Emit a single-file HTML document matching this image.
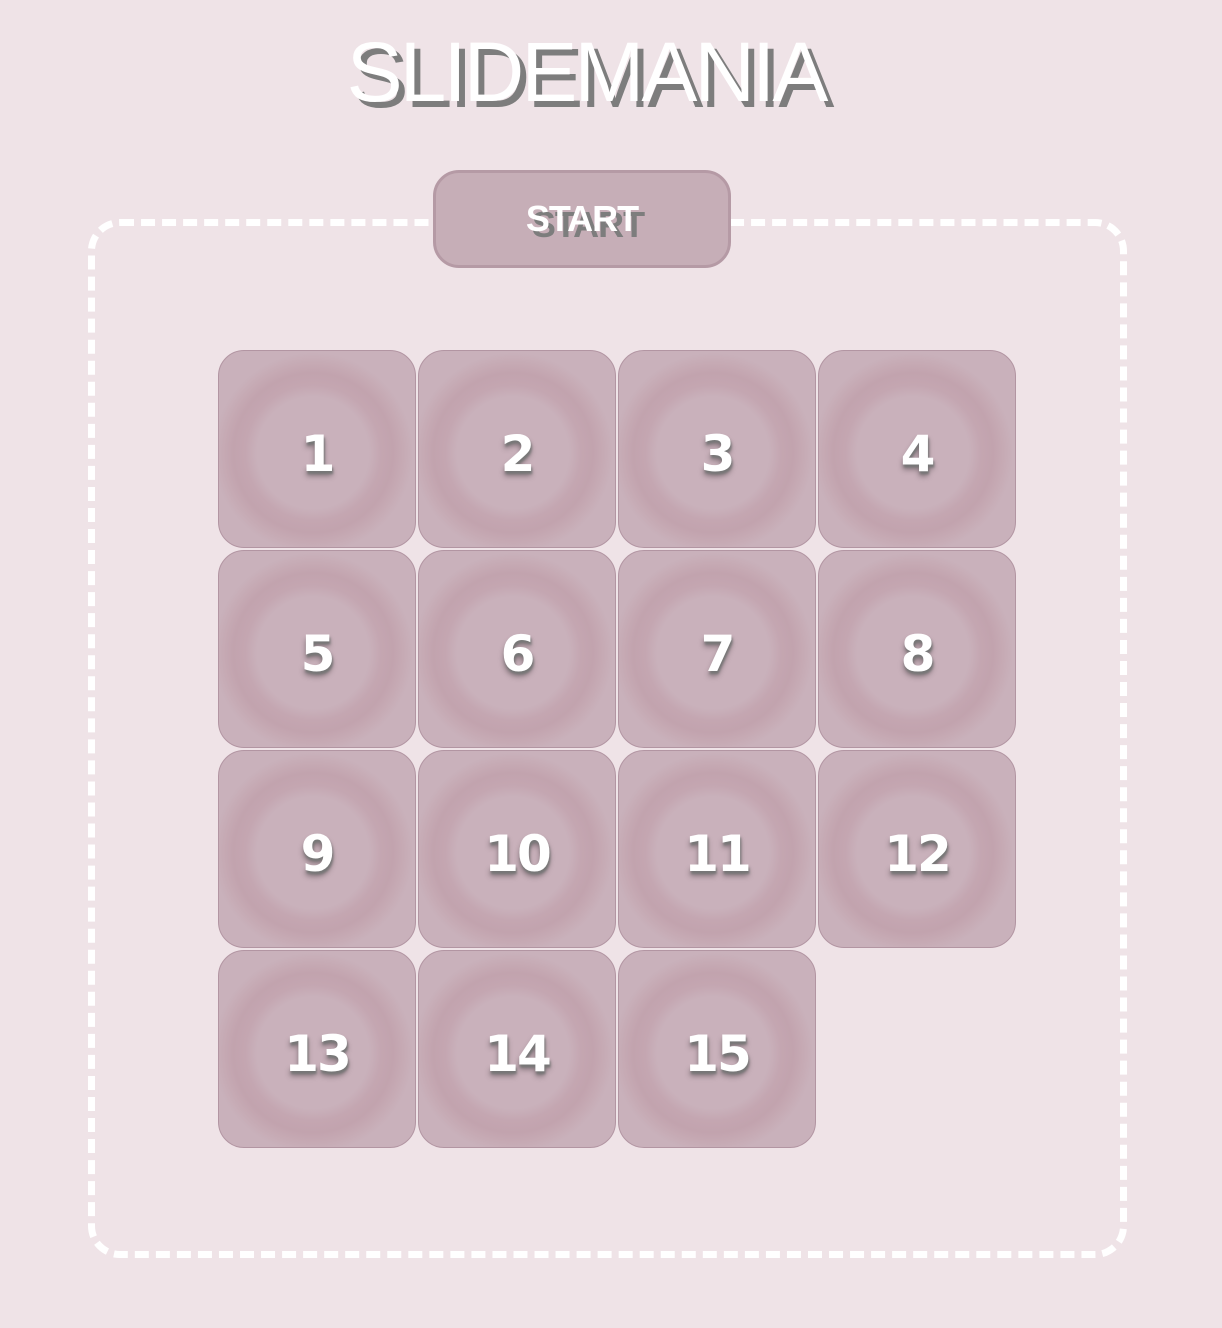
<!DOCTYPE html>
<html><head><style>
body{margin:0;width:1222px;height:1328px;background:#efe3e7;position:relative;overflow:hidden;font-family:"Liberation Sans",Arial,sans-serif}
h1{position:absolute;left:0;width:1172px;margin:0;top:24px;text-align:center;font-size:84px;font-weight:normal;letter-spacing:-3px;color:#fff;text-shadow:6px 6px 0 #7d7d7d;line-height:96px}
.box{position:absolute;left:88px;top:219px;width:1025px;height:1025px;border:7px dashed #fff;border-radius:32px}
.btn{position:absolute;left:433px;top:170px;width:292px;height:92px;background:#c6aeb7;border:3px solid #b59aa5;border-radius:26px;color:#fff;font-weight:bold;font-size:36px;text-align:center;line-height:92px;text-shadow:6px 6px 0 #7d7d7d;letter-spacing:-1px}
.t{position:absolute;width:196px;height:196px;border:1px solid #b295a2;border-radius:26px;background:
radial-gradient(circle at 48% 52%, #c9b1bb 0 56px, #c4a6b1 68px, #c2a3ae 80px, #c6aab4 90px, #c9b1bb 100px);
color:#fff;font-family:"DejaVu Sans",sans-serif;font-weight:bold;font-size:50px;text-align:center;line-height:206px;letter-spacing:-2px;text-shadow:1px 3px 2px #777,0 5px 6px rgba(0,0,0,.35)}
</style></head><body>
<h1>SLIDEMANIA</h1>
<div class="box"></div>
<div class="btn">START</div>
<div class="t" style="left:218px;top:350px">1</div>
<div class="t" style="left:418px;top:350px">2</div>
<div class="t" style="left:618px;top:350px">3</div>
<div class="t" style="left:818px;top:350px">4</div>
<div class="t" style="left:218px;top:550px">5</div>
<div class="t" style="left:418px;top:550px">6</div>
<div class="t" style="left:618px;top:550px">7</div>
<div class="t" style="left:818px;top:550px">8</div>
<div class="t" style="left:218px;top:750px">9</div>
<div class="t" style="left:418px;top:750px">10</div>
<div class="t" style="left:618px;top:750px">11</div>
<div class="t" style="left:818px;top:750px">12</div>
<div class="t" style="left:218px;top:950px">13</div>
<div class="t" style="left:418px;top:950px">14</div>
<div class="t" style="left:618px;top:950px">15</div>
</body></html>
